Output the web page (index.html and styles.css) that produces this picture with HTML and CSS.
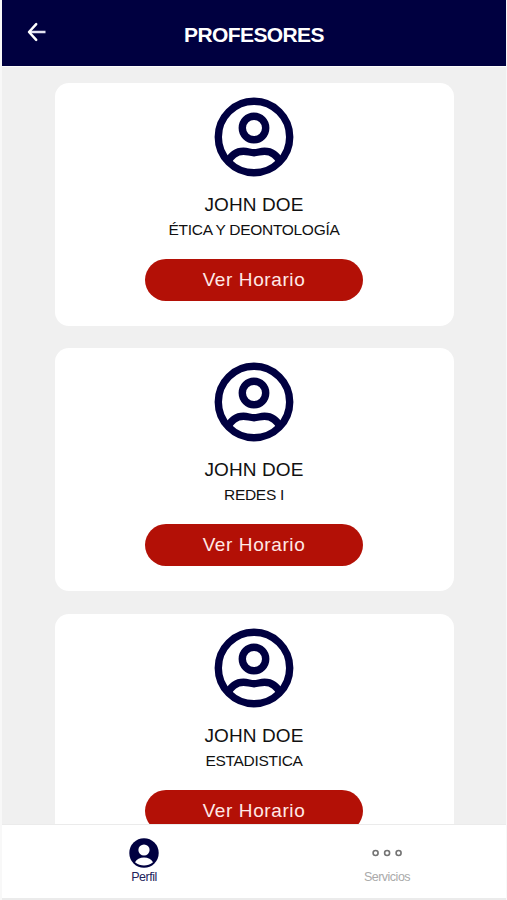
FILE: index.html
```
<!DOCTYPE html>
<html lang="es">
<head>
  <meta charset="UTF-8">
  <title>Profesores</title>
  <link rel="stylesheet" href="styles.css">
</head>
<body>
  <svg class="sprite" width="0" height="0">
    <symbol id="avatar" viewBox="0 0 80 80">
      <g fill="none" stroke="#000040" stroke-width="7.4">
        <circle cx="40" cy="40" r="35.7"/>
        <circle cx="40" cy="31" r="11.7"/>
        <path d="M13 66C17 58 22 54.200 29.500 54.200C34 54.200 36 55.700 40 55.700C44 55.700 46 54.200 50.500 54.200C58 54.200 63 58 67 66"/>
      </g>
    </symbol>
  </svg>

  <div class="app">
    <header class="header">
      <a class="back">
        <svg width="20" height="20" viewBox="0 0 20 20" fill="none" stroke="#fff" stroke-width="2.5" stroke-linecap="round" stroke-linejoin="round">
          <path d="M18.500 10H3" stroke-linecap="butt" stroke="#e2e2f2"/>
          <path d="M9.200 2.200L2 10L9.200 17.800"/>
        </svg>
      </a>
      <h1>PROFESORES</h1>
    </header>

    <main class="list">
      <div class="card">
        <svg class="avatar"><use href="#avatar"/></svg>
        <h2>JOHN DOE</h2>
        <p>ÉTICA Y DEONTOLOGÍA</p>
        <button class="btn">Ver Horario</button>
      </div>
      <div class="card">
        <svg class="avatar"><use href="#avatar"/></svg>
        <h2>JOHN DOE</h2>
        <p>REDES I</p>
        <button class="btn">Ver Horario</button>
      </div>
      <div class="card">
        <svg class="avatar"><use href="#avatar"/></svg>
        <h2>JOHN DOE</h2>
        <p>ESTADISTICA</p>
        <button class="btn">Ver Horario</button>
      </div>
    </main>

    <nav class="tabs">
      <a class="tab active">
        <svg width="30" height="30" viewBox="0 0 30 30">
          <circle cx="15" cy="15" r="14.700" fill="#000040"/>
          <circle cx="15" cy="12" r="5.600" fill="#fff"/>
          <path d="M6 24.300C7.500 21 11 19.500 15 19.500C19 19.500 22.500 21 24 24.300C18.500 28.600 11.500 28.600 6 24.300Z" fill="#fff"/>
        </svg>
        <span>Perfil</span>
      </a>
      <a class="tab">
        <svg width="30" height="30" viewBox="0 0 30 30" fill="none" stroke="#737373" stroke-width="1.600">
          <circle cx="3.600" cy="15" r="2.500"/>
          <circle cx="15.100" cy="15" r="2.500"/>
          <circle cx="26.600" cy="15" r="2.500"/>
        </svg>
        <span>Servicios</span>
      </a>
    </nav>
  </div>
</body>
</html>
```

FILE: styles.css
```
* {
  box-sizing: border-box;
}

body {
  margin: 0;
  background-color: #f8f8f8;
  font-family: "Liberation Sans", Arial, sans-serif;
  color: #111;
}

h1, h2, p {
  margin: 0;
  font-weight: normal;
}

.sprite {
  display: block;
}

.app {
  display: flex;
  flex-direction: column;
  height: 900px;
  padding: 0 1px 0 2px;
  overflow: hidden;
}

.header {
  display: grid;
  grid-template-columns: 70px 1fr 70px;
  align-items: center;
  flex: none;
  height: 67px;
  border-bottom: 1px solid #fcfcfc;
  background-color: #000040;
  color: #fff;
}

.back {
  padding-left: 25px;
  height: 22px;
}

.back svg {
  display: block;
}

.header h1 {
  font-size: 21px;
  font-weight: bold;
  line-height: 24px;
  letter-spacing: -0.6px;
  text-align: center;
  padding-top: 3px;
}

.list {
  flex: 1;
  min-height: 0;
  overflow: hidden;
  padding: 16px 52px 0 53px;
  background-color: #f0f0f0;
}

.card {
  display: flex;
  flex-direction: column;
  align-items: center;
  height: 242.5px;
  margin-bottom: 22.8px;
  padding: 14px 1px 0 0;
  border-radius: 14px;
  background-color: #fff;
}

.avatar {
  width: 80px;
  height: 80px;
}

.card h2 {
  margin-top: 16px;
  font-size: 19px;
  line-height: 24px;
  letter-spacing: 0.1px;
}

.card p {
  margin-top: 2px;
  font-size: 15.5px;
  line-height: 22px;
  letter-spacing: -0.3px;
}

.btn {
  width: 218px;
  height: 42px;
  margin-top: 18px;
  padding: 0;
  border: 0;
  border-radius: 21px;
  background-color: #b31006;
  color: #ffe9e6;
  font-family: inherit;
  font-size: 19px;
  letter-spacing: 0.6px;
}

.tabs {
  display: flex;
  justify-content: space-between;
  flex: none;
  height: 76px;
  padding: 0 59px 0 82px;
  border-top: 1px solid #ebebeb;
  border-bottom: 2px solid #ebebeb;
  background-color: #fff;
}

.tab {
  display: flex;
  flex-direction: column;
  align-items: center;
  width: 120px;
  padding-top: 13px;
  font-size: 12.5px;
  letter-spacing: -0.5px;
  color: #aaa;
}

.tab span {
  margin-top: 2px;
  line-height: 15px;
}

.tab.active {
  color: #22225a;
}
```
